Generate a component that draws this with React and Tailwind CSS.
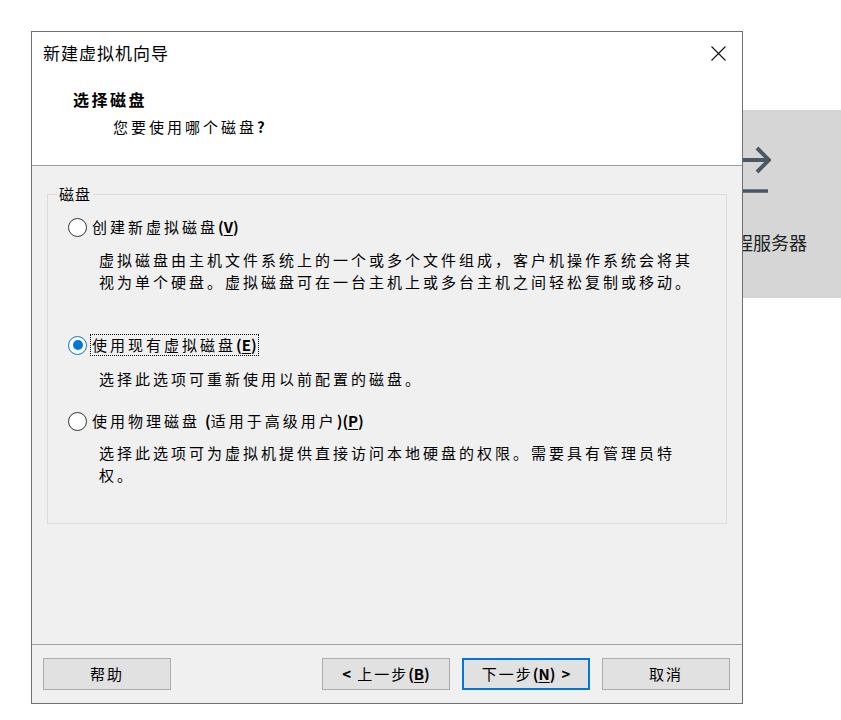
import React, { useState } from 'react';

const cjk = "font-['Noto_Sans_CJK_SC','Liberation_Sans',sans-serif]";

const Hotkey = ({ k }) => (
    <span className="tracking-normal font-semibold">
        (<span className="underline underline-offset-2">{k}</span>)
    </span>
);

const Radio = ({ checked }) =>
    checked ? (
        <span className="w-[19px] h-[19px] shrink-0 rounded-full border border-[#0078d7] bg-white flex items-center justify-center">
            <span className="w-[10px] h-[10px] rounded-full bg-[#0078d7]" />
        </span>
    ) : (
        <span className="w-[19px] h-[19px] shrink-0 rounded-full border border-[#333333] bg-white" />
    );

const Option = ({ checked, focused, label, hotkey, onClick }) => (
    <div className="flex items-center h-[24px] pl-[20px] cursor-default" onClick={onClick}>
        <Radio checked={checked} />
        <span
            className={`ml-[3px] px-[1px] h-[22px] flex items-center text-[15px] tracking-[3px] leading-[20px] border ${
                focused ? 'border-dotted border-black' : 'border-transparent'
            }`}
        >
            {label}
            <Hotkey k={hotkey} />
        </span>
    </div>
);

const Button = ({ children, primary }) => (
    <button
        className={`w-[128px] h-[32px] bg-[#e1e1e1] text-[15px] tracking-[2px] text-black flex items-center justify-center ${
            primary ? 'border-2 border-[#0078d7]' : 'border border-[#adadad]'
        }`}
    >
        {children}
    </button>
);

export default function App() {
    const [choice, setChoice] = useState('existing');

    return (
        <div className={`relative w-full h-[720px] bg-white overflow-hidden text-black ${cjk}`}>
            {/* background page: remote server tile */}
            <div className="flex justify-end pt-[110px]">
                <div className="w-[181px] h-[188px] bg-[#d6d6d6] flex flex-col items-center pt-[36px] pr-[7px]">
                    <svg width="48" height="48" viewBox="0 0 48 48" fill="none" stroke="#4a5866" strokeWidth="4">
                        <path d="M4 14 H45" />
                        <path d="M34 2 L46 14 L34 26" />
                        <path d="M4 45 H45" strokeWidth="3.5" />
                    </svg>
                    <div className="mt-[37px] mr-[6px] text-[18px] leading-[22px] text-[#222] whitespace-nowrap">连接远程服务器</div>
                </div>
            </div>

            {/* wizard window */}
            <div className="absolute left-[31px] top-[31px] w-[712px] h-[673px] border border-[#707070] bg-[#f0f0f0] flex flex-col">
                <div className="h-[134px] bg-white border-b border-[#a0a0a0] flex flex-col">
                    <div className="flex items-center justify-between mt-[10px] h-[22px] pl-[11px] pr-[16px]">
                        <span className="text-[17px] tracking-[1px] leading-[22px]">新建虚拟机向导</span>
                        <svg width="15" height="15" viewBox="0 0 15 15" stroke="#111" strokeWidth="1.1">
                            <path d="M0.5 0.5 L14.5 14.5 M14.5 0.5 L0.5 14.5" />
                        </svg>
                    </div>
                    <div className="mt-[24px] pl-[41px] text-[16px] font-bold tracking-[2.5px] leading-[22px]">选择磁盘</div>
                    <div className="mt-[6px] pl-[81px] text-[15px] tracking-[3px] leading-[22px]">
                        您要使用哪个磁盘<span className="tracking-normal font-semibold">?</span>
                    </div>
                </div>

                <div className="flex-1 px-[15px] pt-[28px]">
                    <div className="relative h-[330px] border border-[#dcdcdc] pt-[20px]">
                        <span className="absolute -top-[12px] left-[9px] px-[2px] bg-[#f0f0f0] text-[15px] tracking-[1px] leading-[22px]">磁盘</span>

                        <Option checked={choice === 'new'} label="创建新虚拟磁盘" hotkey="V" onClick={() => setChoice('new')} />
                        <p className="mt-[10px] pl-[51px] text-[15px] tracking-[3px] leading-[22px]">
                            虚拟磁盘由主机文件系统上的一个或多个文件组成，客户机操作系统会将其
                            <br />
                            视为单个硬盘。虚拟磁盘可在一台主机上或多台主机之间轻松复制或移动。
                        </p>

                        <div className="mt-[40px]">
                            <Option checked={choice === 'existing'} focused label="使用现有虚拟磁盘" hotkey="E" onClick={() => setChoice('existing')} />
                        </div>
                        <p className="mt-[11px] pl-[51px] text-[15px] tracking-[3px] leading-[22px]">选择此选项可重新使用以前配置的磁盘。</p>

                        <div className="mt-[19px]">
                            <Option
                                checked={choice === 'physical'}
                                label={
                                    <>
                                        使用物理磁盘
                                        <span className="ml-[5px] tracking-normal font-semibold">(</span>适用于高级用户
                                        <span className="tracking-normal font-semibold">)</span>
                                    </>
                                }
                                hotkey="P"
                                onClick={() => setChoice('physical')}
                            />
                        </div>
                        <p className="mt-[9px] pl-[51px] text-[15px] tracking-[3px] leading-[22px]">
                            选择此选项可为虚拟机提供直接访问本地硬盘的权限。需要具有管理员特
                            <br />
                            权。
                        </p>
                    </div>
                </div>

                <div className="h-[59px] border-t border-[#a0a0a0] flex items-start pt-[13px] pl-[11px] pr-[12px]">
                    <Button>帮助</Button>
                    <div className="ml-auto flex gap-[12px]">
                        <Button>
                            <span className="font-semibold tracking-normal mr-[6px]">&lt;</span>上一步<Hotkey k="B" />
                        </Button>
                        <Button primary>
                            下一步<Hotkey k="N" />
                            <span className="font-semibold tracking-normal ml-[6px]">&gt;</span>
                        </Button>
                        <Button>取消</Button>
                    </div>
                </div>
            </div>
        </div>
    );
}
